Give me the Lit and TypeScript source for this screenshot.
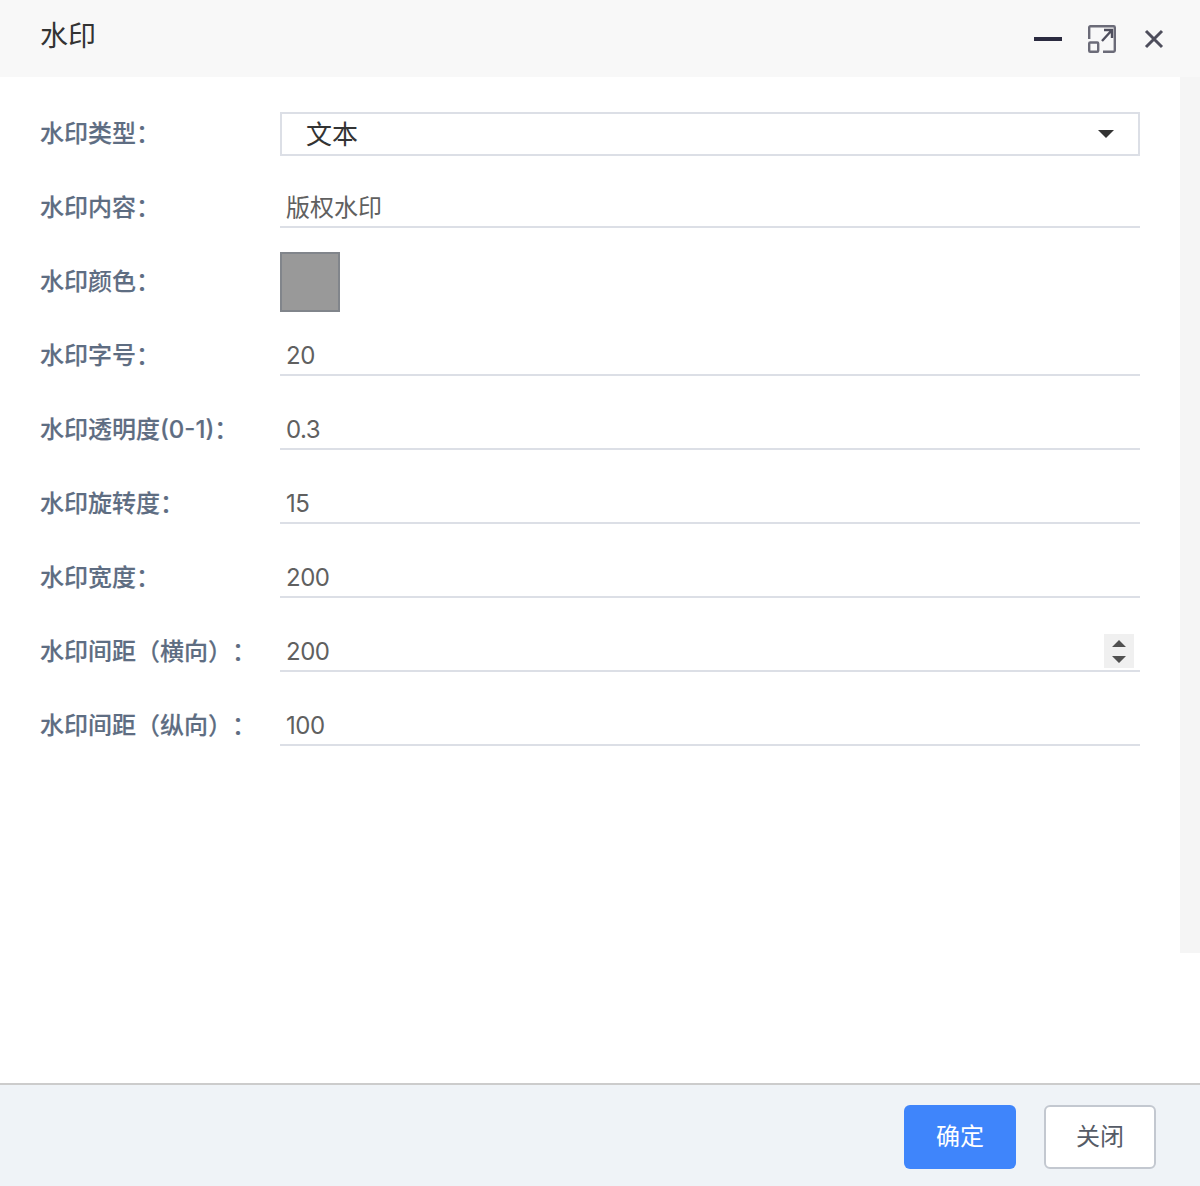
import { LitElement, html, css } from "lit";
import { customElement } from "lit/decorators.js";

@customElement("app-root")
export class AppRoot extends LitElement {
  static styles = css`
    :host {
      display: flex;
      flex-direction: column;
      width: 1200px;
      height: 1186px;
      background: #fff;
      font-family: Inter, "Noto Sans CJK SC", sans-serif;
      text-spacing-trim: space-all;
      overflow: hidden;
    }
    .header {
      height: 77px;
      flex: none;
      background: #f8f8f8;
      display: flex;
      align-items: center;
      padding: 0 35px 0 40px;
      box-sizing: border-box;
    }
    .title {
      flex: 1;
      font-size: 28px;
      color: #333;
      margin-top: -9px;
    }
    .tools {
      display: flex;
      align-items: center;
      gap: 26px;
    }
    .tools svg { display: block; }
    .tools svg.close { margin-left: 1px; }
    .body {
      flex: 1;
      display: flex;
      min-height: 0;
      align-items: flex-start;
    }
    .form {
      flex: 1;
      padding: 19px 40px 0;
      box-sizing: border-box;
    }
    .track {
      width: 20px;
      height: 876px;
      background: #f5f5f5;
      flex: none;
    }
    .row {
      display: grid;
      grid-template-columns: 240px 860px;
      height: 74px;
      align-items: center;
    }
    .label {
      font-size: 24px;
      line-height: 30px;
      font-weight: 500;
      color: #5e6d82;
      -webkit-text-stroke: 0.15px #5e6d82;
      white-space: nowrap;
      margin-top: 1px;
    }
    .select {
      height: 44px;
      box-sizing: border-box;
      border: 2px solid #dcdfe6;
      display: flex;
      align-items: center;
      justify-content: space-between;
      padding: 0 24px;
      font-size: 26px;
      line-height: 36px;
      color: #333;
      margin-top: 2px;
    }
    .select span:first-child { margin-top: 2px; }
    .caret {
      width: 0;
      height: 0;
      border-left: 8px solid transparent;
      border-right: 8px solid transparent;
      border-top: 8px solid #333;
    }
    .input {
      position: relative;
      height: 42px;
      box-sizing: border-box;
      border-bottom: 2px solid #dcdfe6;
      padding: 0 6px;
      font-size: 24px;
      line-height: 43px;
      color: #606060;
    }
    .num { letter-spacing: -0.5px; }
    .swatch {
      width: 60px;
      height: 60px;
      box-sizing: border-box;
      border: 2px solid #81858b;
      background: #999;
      margin-top: 2px;
    }
    .spin {
      position: absolute;
      right: 6px;
      top: 4px;
      width: 30px;
      height: 34px;
      background: #f0f0f0;
    }
    .spin svg { display: block; }
    .footer {
      height: 103px;
      flex: none;
      box-sizing: border-box;
      border-top: 2px solid #ccc;
      background: #eff3f7;
      display: flex;
      justify-content: flex-end;
      align-items: flex-start;
      gap: 28px;
      padding: 20px 44px 0 0;
    }
    .btn {
      width: 112px;
      height: 64px;
      box-sizing: border-box;
      border-radius: 6px;
      font-size: 24px;
      line-height: 30px;
      display: flex;
      align-items: center;
      justify-content: center;
    }
    .primary { background: #3f85fb; color: #fff; }
    .ghost { background: #fff; color: #555b66; border: 2px solid #c3c8d0; }
  `;

  private input(label: string, value: string, spin = false, num = true) {
    return html`<div class="row">
      <div class="label">${label}</div>
      <div class="input">
        <span class=${num ? "num" : ""}>${value}</span>
        ${spin
          ? html`<div class="spin">
              <svg width="30" height="34" viewBox="0 0 30 34">
                <path d="M8 13 L15 6 L22 13 Z M8 22 L22 22 L15 29 Z" fill="#505050" />
              </svg>
            </div>`
          : ""}
      </div>
    </div>`;
  }

  render() {
    return html`
      <div class="header">
        <div class="title">水印</div>
        <div class="tools">
          <svg width="28" height="28" viewBox="0 0 28 28">
            <rect x="0" y="12" width="28" height="4" fill="#2b2b40" />
          </svg>
          <svg width="28" height="28" viewBox="0 0 28 28" fill="none" stroke="#6b6b78" stroke-width="2.4">
            <path d="M1.2 14 V2.4 a1.2 1.2 0 0 1 1.2 -1.2 H25.6 a1.2 1.2 0 0 1 1.2 1.2 V25.6 a1.2 1.2 0 0 1 -1.2 1.2 H15" />
            <rect x="1.2" y="17.5" width="9" height="9.3" rx="1" />
            <path d="M14 16 L24 5 M16 5 H24 V13" stroke="#4f4f5e" />
          </svg>
          <svg class="close" width="22" height="22" viewBox="0 0 22 22" fill="none" stroke="#4e4e5c" stroke-width="3">
            <path d="M3 3 L19 19 M19 3 L3 19" />
          </svg>
        </div>
      </div>
      <div class="body">
        <div class="form">
          <div class="row">
            <div class="label">水印类型：</div>
            <div class="select"><span>文本</span><span class="caret"></span></div>
          </div>
          ${this.input("水印内容：", "版权水印", false, false)}
          <div class="row">
            <div class="label">水印颜色：</div>
            <div class="swatch"></div>
          </div>
          ${this.input("水印字号：", "20")}
          ${this.input("水印透明度(0-1)：", "0.3")}
          ${this.input("水印旋转度：", "15")}
          ${this.input("水印宽度：", "200")}
          ${this.input("水印间距（横向）：", "200", true)}
          ${this.input("水印间距（纵向）：", "100")}
        </div>
        <div class="track"></div>
      </div>
      <div class="footer">
        <div class="btn primary">确定</div>
        <div class="btn ghost">关闭</div>
      </div>
    `;
  }
}
